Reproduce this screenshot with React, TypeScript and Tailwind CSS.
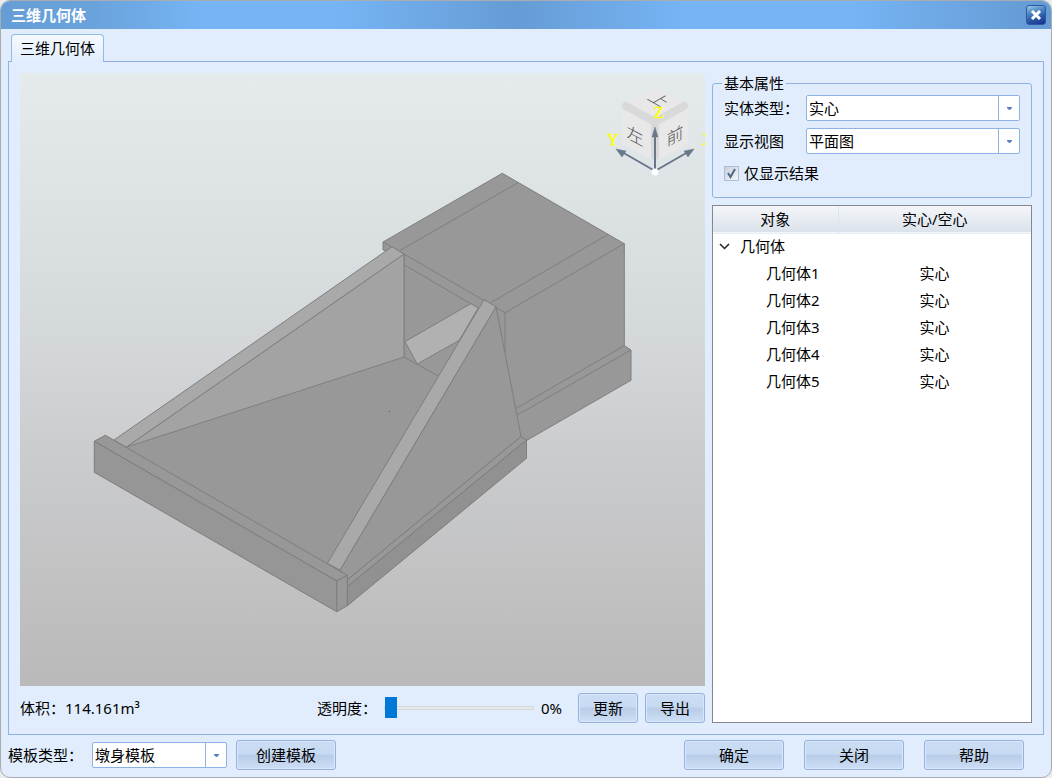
import React, { useState } from "react";

const bodies = [
  { id: 1, name: "几何体1", type: "实心" },
  { id: 2, name: "几何体2", type: "实心" },
  { id: 3, name: "几何体3", type: "实心" },
  { id: 4, name: "几何体4", type: "实心" },
  { id: 5, name: "几何体5", type: "实心" },
];

function PushButton({ children, className }: { children: React.ReactNode; className: string }) {
  return (
    <button
      type="button"
      className={`h-[30px] rounded-[3px] border border-[#93b2e0] bg-[linear-gradient(#cbddf4_0%,#c6daf2_45%,#b9cde9_52%,#cddff5_100%)] leading-5 shadow-[inset_0_0_0_1px_#dae7f8] ${className}`}
    >
      {children}
    </button>
  );
}

function SelectBox({
  id,
  options,
  className,
}: {
  id: string;
  options: string[];
  className: string;
}) {
  return (
    <div className={`relative h-[26px] ${className}`}>
      <select
        id={id}
        className="block h-full w-full appearance-none rounded-[2px] border border-[#8db2e3] bg-white pl-[2px] pr-6 outline-none"
      >
        {options.map((option) => (
          <option key={option}>{option}</option>
        ))}
      </select>
      <span className="pointer-events-none absolute inset-y-0 right-0 flex w-[22px] items-center justify-center border-l border-[#8db2e3]">
        <svg width="5" height="3" viewBox="0 0 5 3">
          <path d="M0 0h5v1L3 3H2L0 1z" fill="#5b83bb" />
        </svg>
      </span>
    </div>
  );
}

function ViewCube() {
  return (
    <g>
      <path d="M622 105L655 87L688 105V144L655 161L622 144Z" fill="#e8e8e8" />
      <path
        d="M626 106L655 122L684 106M655 122V156"
        fill="none"
        stroke="#d9d9d9"
        strokeWidth="8"
        strokeLinecap="round"
        strokeLinejoin="round"
      />
      <g
        fill="#555"
        fontSize="17"
        fontWeight="300"
        textAnchor="middle"
        fontFamily='"Noto Sans CJK SC", sans-serif'
      >
        <text transform="translate(635 142) skewY(28)">左</text>
        <text transform="translate(675 142) skewY(-28)">前</text>
        <text transform="matrix(0.87 0.5 -0.87 0.5 654 103)">上</text>
      </g>
      <g stroke="#68788a" strokeWidth="2" fill="#68788a">
        <path d="M655 171V133M655 171L622 152M655 171L688 152" />
        <path d="M655 127L652 137H658ZM616 149L626 151L622 157ZM694 149L684 151L688 157Z" strokeWidth="0.5" />
      </g>
      <circle cx="655" cy="172" r="3.5" fill="#fff" />
      <g fill="#ff0" fontSize="16" fontFamily='"Liberation Serif", serif' stroke="#ff0" strokeWidth="0.4">
        <text x="654" y="118">Z</text>
        <text x="607" y="145">Y</text>
        <text x="702" y="145">X</text>
      </g>
    </g>
  );
}

function ModelView() {
  return (
    <div className="bg-[linear-gradient(#e5ebed_0%,#d3d7da_45%,#cccdcf_60%,#b9b9b9_100%)]">
      <svg viewBox="20 73 685 613" className="block h-auto w-full" role="img" aria-label="三维几何体">
        <g stroke="#7e7e7e" strokeWidth="1" strokeLinejoin="round" fill="#989898">
          {/* box */}
          <path d="M383 242L502.3 173.3L624.3 243.7V345.7L631 350V380.3L526.5 440.5L404 370V254L383 250Z" />
          <path d="M400.3 250.3L518 182.7M490.7 302.7L608.3 234.3M505 312.7L624.3 243.7M383 242L404 254M404 254L505 312.7M505 312.7V352" />
          <path d="M516.3 408.3L624.3 345.7M517.3 415L631 350" fill="none" />
          <path d="M404.5 265L478 308" />

          {/* base slab */}
          <path d="M105.3 435.3L126 447L404 357L438 376L521 436.5L526.5 440V458.3L347.3 605.7L336.7 611.7L94.3 472.3V441.3Z" stroke="none" />
          <path d="M404 357L438 376" />
          <path d="M405 341.7L470.7 303.7L478.3 307.7L459.3 340.3L417.3 364Z" fill="#b1b1b1" />

          {/* far wing wall */}
          <path d="M404 254V357L126 447.3Z" fill="#a3a3a3" />
          <path d="M392 246.7L404 254L126 447.3L114 440Z" fill="#a9a9a9" />

          {/* near wing wall */}
          <path d="M496 306.7L521 436.5L347.3 580L340 570Z" />
          <path d="M484 299.7L496 306.7L340 570L327.3 563.3Z" fill="#a9a9a9" />
          <path d="M521 436.5L526.5 440L347.3 586.7V580Z" />
          <path d="M526.5 440V458.3L347.3 605.7V586.7Z" fill="#919191" />

          {/* front kerb */}
          <path d="M94.3 441.3L105.3 435.3L347.3 575.3L336.7 581Z" />
          <path d="M94.3 441.3L336.7 581V611.7L94.3 472.3Z" fill="#969696" />
          <path d="M336.7 581L347.3 575.3V605.7L336.7 611.7Z" />
        </g>
        <rect x="389" y="411" width="1" height="1" fill="#4a4a9a" />
        <ViewCube />
      </svg>
    </div>
  );
}

export default function App() {
  const [open, setOpen] = useState(true);
  const [opacity, setOpacity] = useState(0);

  return (
    <div className="min-h-screen bg-[#ececec] text-[15px] leading-[22px] text-black font-['Noto_Sans','Noto_Sans_CJK_SC',sans-serif]">
      <div className="flex min-h-screen flex-col overflow-hidden rounded-[10px] border border-[#a9adb2] bg-[#e1edfc]">
        <header className="flex h-7 items-center justify-between bg-[linear-gradient(90deg,#669dd7_0%,#6aa3dc_9%,#76b4f4_19%,#76b4f4_32%,#669cd5_49%,#76b4f4_65%,#76b4f4_81%,#669cd5_98%)] pl-[10px] pr-[5px]">
          <h1 className="font-bold text-white">三维几何体</h1>
          <button
            type="button"
            aria-label="关闭窗口"
            className="flex size-5 items-center justify-center rounded-[3px] border border-[#2c5aa6] bg-[linear-gradient(160deg,#9ccbe8_0%,#4f86c4_35%,#2a57a5_65%,#142f8a_100%)]"
          >
            <svg width="12" height="10" viewBox="0 0 12 10">
              <path d="M2 1L10 9M10 1L2 9" stroke="#fff" strokeWidth="3" />
            </svg>
          </button>
        </header>

        <main className="flex flex-1 flex-col px-[7px] pt-[5px]">
          <div role="tablist" className="flex pl-[3px]">
            <button
              type="button"
              role="tab"
              aria-selected="true"
              className="z-10 -mb-px h-7 rounded-t-[4px] border border-b-0 border-[#8fbbe8] bg-linear-to-b from-[#f6faff] to-[#e1edfc] px-2 pb-[2px] leading-5"
            >
              三维几何体
            </button>
          </div>

          <div className="flex gap-[7px] border border-[#8db2e3] p-[11px]">
            <div className="flex min-w-0 flex-1 flex-col gap-[7px]">
              <ModelView />
              <div className="flex items-center">
                <span className="flex-1">体积：114.161m³</span>
                <label htmlFor="opacity">透明度：</label>
                <input
                  id="opacity"
                  type="range"
                  min={0}
                  max={100}
                  value={opacity}
                  onChange={(e) => setOpacity(Number(e.target.value))}
                  className="ml-[7px] h-[22px] w-[150px] appearance-none bg-transparent [&::-webkit-slider-runnable-track]:h-1 [&::-webkit-slider-runnable-track]:border [&::-webkit-slider-runnable-track]:border-[#d6d6d6] [&::-webkit-slider-runnable-track]:bg-[#e7eaea] [&::-webkit-slider-thumb]:-mt-[10px] [&::-webkit-slider-thumb]:h-[21px] [&::-webkit-slider-thumb]:w-3 [&::-webkit-slider-thumb]:appearance-none [&::-webkit-slider-thumb]:bg-[#0078d7]"
                />
                <output htmlFor="opacity" className="ml-[7px] w-[37px]">
                  {opacity}%
                </output>
                <div className="flex gap-[7px]">
                  <PushButton className="w-[60px]">更新</PushButton>
                  <PushButton className="w-[60px]">导出</PushButton>
                </div>
              </div>
            </div>

            <aside className="flex w-[320px] flex-col gap-[7px]">
              <fieldset className="rounded-[3px] border border-[#8db2e3] px-[11px] pb-3 pt-[2px]">
                <legend className="-ml-[2px] px-[2px] leading-5">基本属性</legend>
                <div className="flex flex-col gap-[7px]">
                  <div className="flex items-center">
                    <label htmlFor="bodyType" className="w-[82px]">实体类型：</label>
                    <SelectBox id="bodyType" options={["实心", "空心"]} className="w-[214px]" />
                  </div>
                  <div className="flex items-center">
                    <label htmlFor="view" className="w-[82px]">显示视图</label>
                    <SelectBox id="view" options={["平面图", "立面图", "侧面图"]} className="w-[214px]" />
                  </div>
                  <label className="flex h-6 items-center gap-[5px]">
                    <span className="grid">
                      <input
                        type="checkbox"
                        defaultChecked
                        className="peer col-start-1 row-start-1 size-[15px] appearance-none border border-[#a9bedb] bg-linear-to-br from-[#cbd0d8] to-[#f4f6f9]"
                      />
                      <svg
                        viewBox="0 0 15 15"
                        className="pointer-events-none invisible col-start-1 row-start-1 size-[15px] peer-checked:visible"
                      >
                        <path d="M4 7L6.5 11L11 3" fill="none" stroke="#4f698c" strokeWidth="2" />
                      </svg>
                    </span>
                    仅显示结果
                  </label>
                </div>
              </fieldset>

              <div className="flex-1 border border-[#828790] bg-white">
                <table className="w-full table-fixed border-collapse">
                  <thead>
                    <tr className="h-[27px] border-b border-[#e3eefb] bg-linear-to-b from-[#f4f6f9] to-[#dbe2eb]">
                      <th className="w-[125px] border-r border-[#d9e6f5] p-0 font-normal">对象</th>
                      <th className="p-0 font-normal">实心/空心</th>
                    </tr>
                  </thead>
                  <tbody>
                    <tr className="h-[26px]">
                      <td className="p-0 pl-[6px]">
                        <button
                          type="button"
                          aria-expanded={open}
                          onClick={() => setOpen(!open)}
                          className="flex items-center gap-[10px]"
                        >
                          <svg width="11" height="7" viewBox="0 0 11 7" className={open ? "" : "-rotate-90"}>
                            <path d="M1 1L5.5 5.5L10 1" fill="none" stroke="#222" strokeWidth="1.5" />
                          </svg>
                          几何体
                        </button>
                      </td>
                      <td></td>
                    </tr>
                    {open &&
                      bodies.map((body) => (
                        <tr key={body.id} className="h-[27px]">
                          <td className="p-0 pl-[53px]">{body.name}</td>
                          <td className="p-0 text-center">{body.type}</td>
                        </tr>
                      ))}
                  </tbody>
                </table>
              </div>
            </aside>
          </div>

          <footer className="flex items-center pb-[7px] pt-[5px] pr-5">
            <label htmlFor="template" className="w-[84px]">模板类型：</label>
            <SelectBox id="template" options={["墩身模板", "承台模板"]} className="w-[135px]" />
            <PushButton className="ml-[9px] w-[100px]">创建模板</PushButton>
            <div className="ml-auto flex gap-5">
              <PushButton className="w-[100px]">确定</PushButton>
              <PushButton className="w-[100px]">关闭</PushButton>
              <PushButton className="w-[100px]">帮助</PushButton>
            </div>
          </footer>
        </main>
      </div>
    </div>
  );
}
